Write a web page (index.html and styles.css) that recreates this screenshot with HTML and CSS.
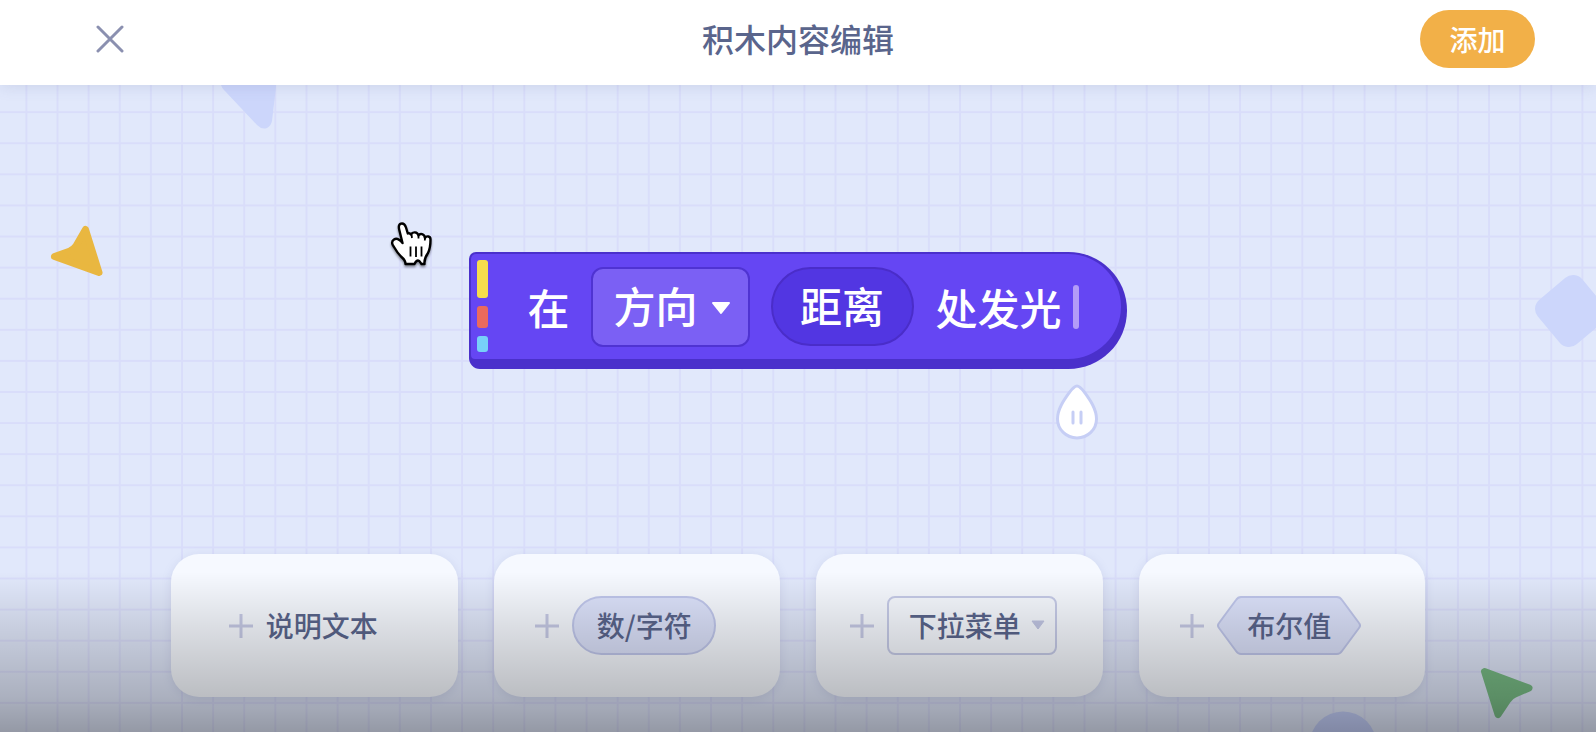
FILE: index.html
```html
<!DOCTYPE html>
<html lang="zh-CN">
<head>
    <meta charset="UTF-8">
    <meta name="viewport" content="width=device-width, initial-scale=1.0">
    <title>积木内容编辑</title>
    <link rel="stylesheet" href="styles.css">
</head>
<body>

    <header class="topbar">
        <button class="close-btn" type="button" aria-label="关闭">
            <svg width="28" height="28" viewBox="0 0 28 28">
                <path d="M2 2 L26 26 M26 2 L2 26" fill="none" stroke="#8b90b0" stroke-width="3" stroke-linecap="round"/>
            </svg>
        </button>
        <h1>积木内容编辑</h1>
        <button class="add-btn" type="button">添加</button>
    </header>

    <main class="workspace">
        <!-- Background grid -->
        <svg class="grid-bg" width="100%" height="100%" aria-hidden="true">
            <defs>
                <pattern id="grid" x="25.4" y="26.2" width="31.12" height="31.09" patternUnits="userSpaceOnUse">
                    <path d="M0 1 H31.12 M1 0 V31.09" fill="none" stroke="#d9ddfa" stroke-width="1.8"/>
                </pattern>
            </defs>
            <rect width="100%" height="100%" fill="url(#grid)"/>
        </svg>

        <!-- Floating shapes -->
        <svg class="shape shape-triangle" width="60" height="46" viewBox="0 0 60 46" aria-hidden="true">
            <path d="M1 0 Q2 3 4 5 L37 40 Q42 45 47 43 Q51 41 52 36 L56 2 L56 0 Z" fill="#ccd6fb"/>
        </svg>
        <svg class="shape shape-yellow" width="54" height="53" viewBox="0 0 54 53" aria-hidden="true">
            <path d="M35.5 4.5 L49 47.5 L4.5 31.5 L20 26 Q24 24 26 21 Z" fill="#e9b740" stroke="#e9b740" stroke-width="7" stroke-linejoin="round"/>
        </svg>
        <svg class="shape shape-diamond" width="62" height="74" viewBox="0 0 62 74" aria-hidden="true">
            <rect x="8" y="8" width="58" height="58" rx="12" fill="#ccd6fb" transform="rotate(50 37 37)"/>
        </svg>
        <svg class="shape shape-circle" width="68" height="21" viewBox="0 0 68 21" aria-hidden="true">
            <circle cx="34" cy="34" r="33.5" fill="#c4cffa"/>
        </svg>
        <svg class="shape shape-green" width="54" height="52" viewBox="0 0 54 52" aria-hidden="true">
            <path d="M4.5 4.5 L49 21 L35 27 Q30 29 27 34 L18 47.5 Z" fill="#78bb85" stroke="#78bb85" stroke-width="7" stroke-linejoin="round"/>
        </svg>

        <!-- Block being edited -->
        <div class="block">
            <div class="block-face">
                <div class="marks">
                    <span class="mark mark-yellow"></span>
                    <span class="mark mark-red"></span>
                    <span class="mark mark-blue"></span>
                </div>
                <span class="block-text">在</span>
                <div class="block-select">
                    <select aria-label="下拉菜单">
                        <option>方向</option>
                    </select>
                    <svg class="select-arrow" width="20" height="14" viewBox="0 0 20 14" aria-hidden="true">
                        <path d="M2 2 H18 L10 12 Z" fill="#fff" stroke="#fff" stroke-width="2" stroke-linejoin="round"/>
                    </svg>
                </div>
                <input class="block-input" type="text" value="距离" aria-label="数/字符">
                <span class="block-text">处发光</span>
                <span class="caret">
                    <svg class="caret-handle" width="44" height="58" viewBox="0 0 44 58" aria-hidden="true">
                        <path d="M22 3 C19 3 17 6 14 10 C9 17 2.5 26 2.5 36 A19.5 19 0 0 0 41.5 36 C41.5 26 35 17 30 10 C27 6 25 3 22 3 Z" fill="#fff" stroke="#c6cef5" stroke-width="3"/>
                        <path d="M18 29 V40 M26 29 V40" stroke="#c6cef5" stroke-width="3" stroke-linecap="round"/>
                    </svg>
                </span>
            </div>
        </div>

        <!-- Parts that can be added -->
        <div class="palette">
            <button class="card" type="button">
                <svg class="plus" width="24" height="24" viewBox="0 0 24 24" aria-hidden="true">
                    <path d="M12 0 V24 M0 12 H24"/>
                </svg>
                <span class="chip">说明文本</span>
            </button>
            <button class="card" type="button">
                <svg class="plus" width="24" height="24" viewBox="0 0 24 24" aria-hidden="true">
                    <path d="M12 0 V24 M0 12 H24"/>
                </svg>
                <span class="chip chip-round">数/字符</span>
            </button>
            <button class="card card-menu" type="button">
                <svg class="plus" width="24" height="24" viewBox="0 0 24 24" aria-hidden="true">
                    <path d="M12 0 V24 M0 12 H24"/>
                </svg>
                <span class="chip chip-menu">下拉菜单
                    <svg width="14" height="10" viewBox="0 0 14 10" aria-hidden="true">
                        <path d="M1 1 H13 L7 9 Z" fill="#c1c6e4" stroke="#c1c6e4" stroke-linejoin="round"/>
                    </svg>
                </span>
            </button>
            <button class="card" type="button">
                <svg class="plus" width="24" height="24" viewBox="0 0 24 24" aria-hidden="true">
                    <path d="M12 0 V24 M0 12 H24"/>
                </svg>
                <span class="chip chip-hex">
                    <svg class="hex" width="144" height="59" viewBox="0 0 144 59" aria-hidden="true">
                        <path d="M24 1 H120 Q123 1 125 4 L142 27 Q144 29.5 142 32 L125 55 Q123 58 120 58 H24 Q21 58 19 55 L2 32 Q0 29.5 2 27 L19 4 Q21 1 24 1 Z" fill="#dce2fb" stroke="#c0c7ec" stroke-width="2"/>
                    </svg>
                    <span class="hex-label">布尔值</span>
                </span>
            </button>
        </div>

        <!-- Hand pointer -->
        <svg class="pointer" width="46" height="50" viewBox="0 0 46 50" aria-hidden="true">
            <path d="M13 2.5 C9.5 2.5 9.5 6 10.3 9 L13.5 22 C11 19 8 16.5 5 18.5 C2 20.5 3 23.5 5 26 C7 29.5 9 32.5 12 35.5 C15 38 16.5 39.5 16.5 43 L25.5 43 C26.5 41 27.5 39.5 29 39.5 C30.5 39.5 31.5 41.5 32.5 43 L35.5 43 C35 38.5 36.5 35.5 39 32 C41 28 41.5 23 41.5 18.5 C41.5 15 37.5 14.5 36 17 C35.5 12.5 31 12 29.5 14.5 C28.5 10.5 23.5 10.5 22 13.5 C21 12 20 12 18.8 12.5 L17 6.5 C16.2 4 15 2.5 13 2.5 Z" fill="#fff" stroke="#000" stroke-width="2.4" stroke-linejoin="round"/>
            <path d="M21.500 25.5 V35.5 M27 25.5 V36 M32.500 25.5 V35.5 M22.5 13.5 L23 17 M29.5 14.5 V17.5 M36 17 L35.8 19.5" fill="none" stroke="#000" stroke-width="1.8"/>
        </svg>
    </main>

</body>
</html>
```

FILE: styles.css
```css
* {
    box-sizing: border-box;
}

body {
    font-family: "Noto Sans CJK SC", sans-serif;
    font-weight: 500;
    margin: 0;
    min-height: 100vh;
    display: flex;
    flex-direction: column;
    color: #5a658c;
}

button, input, select {
    font: inherit;
    color: inherit;
    border: none;
    margin: 0;
    padding: 0;
}

button {
    cursor: pointer;
}

/* Top bar */
.topbar {
    display: grid;
    grid-template-columns: 1fr auto 1fr;
    align-items: center;
    padding: 10px 61px 17px;
    background-color: #fff;
    box-shadow: 0 2px 14px rgba(90, 100, 150, 0.15);
    position: relative;
    z-index: 1;
}

.topbar h1 {
    margin: 0;
    font-size: 32px;
    font-weight: 500;
    line-height: 46px;
    padding-bottom: 2px;
}

.close-btn {
    justify-self: start;
    margin-left: 35px;
    background: none;
}

.close-btn svg {
    display: block;
}

.add-btn {
    justify-self: end;
    width: 115px;
    height: 58px;
    border-radius: 29px;
    background-color: #f2b048;
    color: #fff;
    font-size: 28px;
}

/* Workspace */
.workspace {
    flex: 1;
    position: relative;
    overflow: hidden;
    display: flex;
    flex-direction: column;
    justify-content: space-between;
    align-items: center;
    padding: 167px 171px 35px;
    background-color: #e1e8fb;
}

/* Shade rising from the bottom edge */
.workspace::after {
    content: "";
    position: absolute;
    left: 0;
    right: 0;
    bottom: 0;
    height: 160px;
    background: linear-gradient(to bottom, rgba(0, 0, 0, 0), rgba(0, 0, 0, 0.11) 34%, rgba(0, 0, 0, 0.24) 78%, rgba(0, 0, 0, 0.34));
    pointer-events: none;
}

.grid-bg {
    position: absolute;
    top: 0;
    left: 0;
}

.shape {
    position: absolute;
}

.shape-triangle {
    top: 0;
    left: 220px;
}

.shape-yellow {
    top: 140px;
    left: 50px;
}

.shape-diamond {
    top: 189px;
    right: 0;
}

.shape-circle {
    right: 219px;
    bottom: 0;
}

.shape-green {
    right: 62px;
    bottom: 13px;
}

.pointer {
    position: absolute;
    top: 136px;
    left: 389px;
    filter: drop-shadow(0 2px 1px rgba(0, 0, 0, 0.4));
}

/* Block */
.block {
    position: relative;
    padding: 2px 6px 10px 2px;
    background-color: #4a30cb;
    border-radius: 7px 59px 59px 11px;
}

.block-face {
    display: flex;
    align-items: center;
    height: 105px;
    padding: 0 42px 0 6px;
    background-color: #6546f3;
    border-radius: 5px 53px 53px 4px;
    color: #fff;
    font-size: 42px;
    line-height: 60px;
}

.marks {
    display: flex;
    flex-direction: column;
    gap: 8px;
    margin-right: 39px;
    padding-bottom: 2px;
}

.mark {
    width: 11px;
    border-radius: 3px;
}

.mark-yellow {
    height: 38px;
    background-color: #f6dd4b;
}

.mark-red {
    height: 22px;
    background-color: #ea6a5d;
}

.mark-blue {
    height: 16px;
    background-color: #77d0f9;
}

.block-select {
    position: relative;
    margin: 0 21px;
}

.block-select select {
    appearance: none;
    width: 159px;
    height: 80px;
    padding: 0 0 4px 21px;
    border: 2px solid #4f33d2;
    border-radius: 12px;
    background-color: #7b60f4;
}

.select-arrow {
    position: absolute;
    top: 34px;
    right: 19px;
    pointer-events: none;
}

.block-input {
    width: 143px;
    height: 79px;
    margin-right: 22px;
    padding-bottom: 4px;
    border: 2px solid #4a2dc9;
    border-radius: 40px;
    background-color: #5236e2;
    text-align: center;
}

.caret {
    position: relative;
    width: 6px;
    height: 44px;
    margin-left: 11px;
    border-radius: 3px;
    background-color: #b39cf8;
}

.caret-handle {
    position: absolute;
    top: 98px;
    left: -18px;
}

/* Palette */
.palette {
    position: relative;
    width: 100%;
    display: grid;
    grid-template-columns: repeat(4, 1fr);
    gap: 36px;
}

.card {
    display: flex;
    align-items: center;
    justify-content: center;
    gap: 13px;
    height: 143px;
    padding-right: 22px;
    border-radius: 28px;
    background-color: #f6f9ff;
    box-shadow: 0 2px 10px rgba(120, 130, 180, 0.18);
    font-size: 28px;
}

.card-menu {
    padding-right: 12px;
}

.plus {
    fill: none;
    stroke: #c6cae6;
    stroke-width: 3;
}

.chip {
    display: flex;
    align-items: center;
    justify-content: center;
    height: 59px;
    padding-bottom: 2px;
}

.chip-round {
    width: 144px;
    border: 2px solid #c0c7ec;
    border-radius: 30px;
    background-color: #dce2fb;
}

.chip-menu {
    gap: 10px;
    width: 170px;
    padding-left: 10px;
    border: 2px solid #c6cbe8;
    border-radius: 8px;
}

.chip-hex {
    position: relative;
    width: 144px;
}

.hex {
    position: absolute;
    top: 0;
    left: 0;
}

.hex-label {
    position: relative;
}
```
